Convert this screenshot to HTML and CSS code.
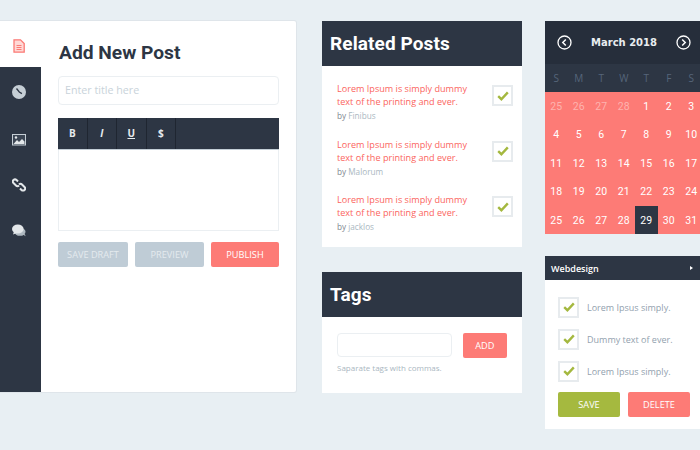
FILE: index.html
```html
<!DOCTYPE html>
<html lang="en">
<head>
    <meta charset="UTF-8">
    <title>Dashboard widgets</title>
    <link rel="stylesheet" href="styles.css">
</head>
<body>
<div class="page">
    <div class="post-card">
        <div class="side">
            <div class="tab active">
                <svg width="12" height="14" viewBox="0 0 12 14"><path d="M1 .8h6.500l3.700 3.700v8.700H1z" fill="#ffd9d6" stroke="#fb7a75" stroke-width="1.300"/><path d="M3.500 6.500h5M3.500 8.500h5M3.500 10.500h5" stroke="#fb7a75"/></svg>
            </div>
            <div class="side-dark">
                <svg width="14" height="14" viewBox="0 0 14 14"><circle cx="7" cy="7" r="7" fill="#c5ced5"/><path d="M4.500 3.500L7.300 7l2.600 1.600" fill="none" stroke="#2d3644" stroke-width="1.300"/></svg>
                <svg class="pic-icon" width="14" height="12" viewBox="0 0 14 12"><rect x=".5" y=".5" width="13" height="10.500" fill="#3c4654" stroke="#c5ced5"/><path d="M1.500 10l3.500-4 2 2 3-3 2.500 2.500V10z" fill="#e3e7ea"/><circle cx="4" cy="3.500" r="1.200" fill="#e3e7ea"/></svg>
                <svg width="14" height="14" viewBox="0 0 14 14"><g fill="none" stroke="#e3e7ea" stroke-width="2"><path d="M6 3.500L4.500 2a2.100 2.100 0 0 0-3 3L4 7.500a2.100 2.100 0 0 0 3 0"/><path d="M8 10.500l1.500 1.500a2.100 2.100 0 0 0 3-3L10 6.500a2.100 2.100 0 0 0-3 0"/></g></svg>
                <svg width="14" height="13" viewBox="0 0 14 13"><path d="M9 9.500c2 0 4.500-.2 4.500 2.800L11.800 11z" fill="#aeb8c0"/><ellipse cx="8" cy="7.800" rx="5.500" ry="4" fill="#aeb8c0"/><ellipse cx="5.800" cy="5" rx="5.800" ry="4.500" fill="#e3e7ea"/><path d="M2 7.500L1 10.500 5 9z" fill="#e3e7ea"/></svg>
            </div>
        </div>
        <div class="post-main">
            <h1>Add New Post</h1>
            <div class="field title-field">Enter title here</div>
            <div class="toolbar">
                <span class="tool bold">B</span>
                <span class="tool italic">I</span>
                <span class="tool under">U</span>
                <span class="tool bold">$</span>
            </div>
            <div class="editor"></div>
            <div class="post-btns">
                <span class="btn grey draft">SAVE DRAFT</span>
                <span class="btn grey preview">PREVIEW</span>
                <span class="btn red publish">PUBLISH</span>
            </div>
        </div>
    </div>

    <div class="col-mid">
        <div class="panel related">
            <h2>Related Posts</h2>
            <div class="rel-list">
                <div class="rel-item">
                    <div class="rel-text">
                        <p>Lorem Ipsum is simply dummy text of the printing and ever.</p>
                        <small><b>by</b> Finibus</small>
                    </div>
                    <span class="check"><svg width="12" height="10" viewBox="0 0 12 10"><path d="M1.200 5.200l3.200 3 6.400-6.800" fill="none" stroke="#a4b83f" stroke-width="2.400"/></svg></span>
                </div>
                <div class="rel-item">
                    <div class="rel-text">
                        <p>Lorem Ipsum is simply dummy text of the printing and ever.</p>
                        <small><b>by</b> Malorum</small>
                    </div>
                    <span class="check"><svg width="12" height="10" viewBox="0 0 12 10"><path d="M1.200 5.200l3.200 3 6.400-6.800" fill="none" stroke="#a4b83f" stroke-width="2.400"/></svg></span>
                </div>
                <div class="rel-item">
                    <div class="rel-text">
                        <p>Lorem Ipsum is simply dummy text of the printing and ever.</p>
                        <small><b>by</b> jacklos</small>
                    </div>
                    <span class="check"><svg width="12" height="10" viewBox="0 0 12 10"><path d="M1.200 5.200l3.200 3 6.400-6.800" fill="none" stroke="#a4b83f" stroke-width="2.400"/></svg></span>
                </div>
            </div>
        </div>
        <div class="panel tags">
            <h2>Tags</h2>
            <div class="tags-body">
                <div class="tags-row">
                    <div class="field tag-field"></div>
                    <span class="btn red add">ADD</span>
                </div>
                <p class="hint">Saparate tags with commas.</p>
            </div>
        </div>
    </div>

    <div class="col-right">
        <div class="calendar">
            <div class="cal-head">
                <svg width="15" height="15" viewBox="0 0 15 15"><circle cx="7.500" cy="7.500" r="6.500" fill="none" stroke="#fff" stroke-width="1.300"/><path d="M8.800 4.500L5.800 7.500l3 3" fill="none" stroke="#fff" stroke-width="1.500"/></svg>
                <span class="cal-title">March 2018</span>
                <svg width="15" height="15" viewBox="0 0 15 15"><circle cx="7.500" cy="7.500" r="6.500" fill="none" stroke="#fff" stroke-width="1.300"/><path d="M6.200 4.500l3 3-3 3" fill="none" stroke="#fff" stroke-width="1.500"/></svg>
            </div>
            <div class="cal-week">
                <span>S</span><span>M</span><span>T</span><span>W</span><span>T</span><span>F</span><span>S</span>
            </div>
            <div class="cal-days">
                <span class="old">25</span><span class="old">26</span><span class="old">27</span><span class="old">28</span><span>1</span><span>2</span><span>3</span>
                <span>4</span><span>5</span><span>6</span><span>7</span><span>8</span><span>9</span><span>10</span>
                <span>11</span><span>12</span><span>13</span><span>14</span><span>15</span><span>16</span><span>17</span>
                <span>18</span><span>19</span><span>20</span><span>21</span><span>22</span><span>23</span><span>24</span>
                <span>25</span><span>26</span><span>27</span><span>28</span><span class="today">29</span><span>30</span><span>31</span>
            </div>
        </div>
        <div class="panel webdesign">
            <div class="web-head"><span>Webdesign</span><i class="arrow"></i></div>
            <div class="web-body">
                <div class="web-row">
                    <span class="check"><svg width="12" height="10" viewBox="0 0 12 10"><path d="M1.200 5.200l3.200 3 6.400-6.800" fill="none" stroke="#a4b83f" stroke-width="2.400"/></svg></span>
                    <span>Lorem Ipsus simply.</span>
                </div>
                <div class="web-row">
                    <span class="check"><svg width="12" height="10" viewBox="0 0 12 10"><path d="M1.200 5.200l3.200 3 6.400-6.800" fill="none" stroke="#a4b83f" stroke-width="2.400"/></svg></span>
                    <span>Dummy text of ever.</span>
                </div>
                <div class="web-row">
                    <span class="check"><svg width="12" height="10" viewBox="0 0 12 10"><path d="M1.200 5.200l3.200 3 6.400-6.800" fill="none" stroke="#a4b83f" stroke-width="2.400"/></svg></span>
                    <span>Lorem Ipsus simply.</span>
                </div>
                <div class="web-btns">
                    <span class="btn green">SAVE</span>
                    <span class="btn red">DELETE</span>
                </div>
            </div>
        </div>
    </div>
</div>
</body>
</html>
```

FILE: styles.css
```css
* {
    box-sizing: border-box;
}

html, body {
    height: 100%;
}

body {
    margin: 0;
    background: #e8eff3;
    font-family: "Open Sans", "Liberation Sans", sans-serif;
    color: #2d3644;
    overflow: hidden;
}

h1, h2, p {
    margin: 0;
}

.page {
    display: flex;
    align-items: flex-start;
    padding-top: 21px;
}

/* add post */
.post-card {
    display: flex;
    width: 296px;
    height: 371px;
    background: #fff;
    box-shadow: 0 0 0 1px #dfe5ea;
    border-radius: 0 2px 2px 0;
}

.side {
    display: flex;
    flex-direction: column;
    width: 41px;
    flex: none;
}

.tab {
    display: flex;
    justify-content: center;
    height: 46px;
    padding: 18px 3px 0 0;
}

.side-dark {
    flex: 1;
    display: flex;
    flex-direction: column;
    align-items: center;
    gap: 32px;
    padding: 18px 3px 0 0;
    background: #2d3644;
}

.pic-icon {
    margin-top: 3px;
}

.post-main {
    flex: 1;
    padding: 20px 17px 0 17px;
}

h1 {
    font-family: Roboto, sans-serif;
    font-size: 19.200px;
    font-weight: 700;
    line-height: 24px;
    margin-left: 1px;
}

.field {
    background: #fff;
    border: 1px solid #ebeff2;
    border-radius: 4px;
}

.title-field {
    height: 29px;
    margin-top: 11px;
    padding-left: 6px;
    font-size: 10.700px;
    line-height: 27px;
    color: #c9d3da;
}

.toolbar {
    display: flex;
    height: 32px;
    margin-top: 13px;
    background: #2d3644;
    border-bottom: 1px solid #c3ced6;
}

.tool {
    width: 29.500px;
    border-right: 1px solid #1f2631;
    color: #e6eaed;
    font-size: 10px;
    font-weight: 700;
    line-height: 31px;
    text-align: center;
}

.italic {
    font-style: italic;
}

.under {
    text-decoration: underline;
}

.editor {
    height: 81px;
    border: 1px solid #ebeff2;
    border-top: 0;
}

.post-btns {
    display: flex;
    justify-content: space-between;
    margin-top: 11px;
}

.btn {
    display: block;
    height: 25px;
    border-radius: 2px;
    color: #fff;
    font-size: 9.200px;
    line-height: 25px;
    text-align: center;
}

.grey {
    background: #bfccd6;
    color: #e4eaee;
}

.red {
    background: #fd7b76;
}

.green {
    background: #a5b93f;
}

.draft {
    width: 70px;
}

.preview {
    width: 69px;
}

.publish {
    width: 68px;
}

/* middle column */
.col-mid {
    width: 200px;
    margin-left: 26px;
}

.panel {
    background: #fff;
}

.panel h2 {
    height: 45px;
    padding-left: 8px;
    background: #2d3644;
    color: #fff;
    font-family: Roboto, sans-serif;
    font-size: 19px;
    font-weight: 700;
    line-height: 45px;
    letter-spacing: .1px;
}

.related {
    height: 226px;
}

.rel-list {
    padding: 16px 0 0 15px;
}

.rel-item {
    display: flex;
    justify-content: space-between;
    height: 55.500px;
    padding-right: 9px;
}

.rel-text p {
    width: 145px;
    color: #fb6560;
    font-size: 9.100px;
    line-height: 13px;
}

.rel-text small {
    display: block;
    margin-top: 1px;
    color: #aab7c1;
    font-size: 8.200px;
    line-height: 13px;
}

.rel-text b {
    color: #7f8890;
    font-weight: 400;
}

.check {
    display: flex;
    align-items: center;
    justify-content: center;
    flex: none;
    width: 21px;
    height: 21px;
    margin-top: 3px;
    background: #fff;
    border: 2px solid #e7ebee;
}

.tags {
    height: 121px;
    margin-top: 25px;
}

.tags-body {
    padding: 16px 15px 0 15px;
}

.tags-row {
    display: flex;
    justify-content: space-between;
}

.tag-field {
    width: 115px;
    height: 24px;
}

.add {
    width: 44.500px;
}

.hint {
    margin-top: 4px;
    color: #aab7c1;
    font-size: 8px;
    line-height: 12px;
}

/* right column */
.col-right {
    width: 155px;
    margin-left: 23px;
}

.calendar {
    height: 213px;
    background: #fd7b76;
}

.cal-head {
    display: flex;
    align-items: center;
    justify-content: space-between;
    height: 43px;
    padding: 0 9px 0 12px;
    background: #262e3b;
}

.cal-title {
    color: #e9edf0;
    font-family: "DejaVu Sans", sans-serif;
    font-size: 10px;
    font-weight: 700;
}

.cal-week {
    display: grid;
    grid-template-columns: repeat(7, 22.500px);
    height: 28px;
    background: #2d3644;
    color: #56657a;
    font-size: 10px;
    line-height: 28px;
    text-align: center;
}

.cal-days {
    display: grid;
    grid-template-columns: repeat(7, 22.500px);
    grid-auto-rows: 28.400px;
    height: 142px;
    color: #fff;
    font-family: Roboto, sans-serif;
    font-size: 10.500px;
    line-height: 30px;
    text-align: center;
}

.cal-days .old {
    color: #fdb3af;
}

.cal-days .today {
    background: #2d3644;
}

.webdesign {
    height: 173px;
    margin-top: 22px;
}

.web-head {
    display: flex;
    align-items: center;
    justify-content: space-between;
    height: 24px;
    padding: 0 7px 0 6px;
    background: #2d3644;
    color: #fff;
    font-size: 9px;
    font-weight: 600;
}

.arrow {
    border-left: 3px solid #fff;
    border-top: 2px solid transparent;
    border-bottom: 2px solid transparent;
}

.web-body {
    padding: 11px 10px 0 13px;
}

.web-row {
    display: flex;
    align-items: center;
    gap: 8px;
    height: 32px;
    color: #92a1ae;
    font-size: 9px;
}

.web-row .check {
    margin-top: 0;
}

.web-btns {
    display: flex;
    justify-content: space-between;
    margin-top: 5px;
}

.web-btns .btn {
    width: 62px;
}
```
